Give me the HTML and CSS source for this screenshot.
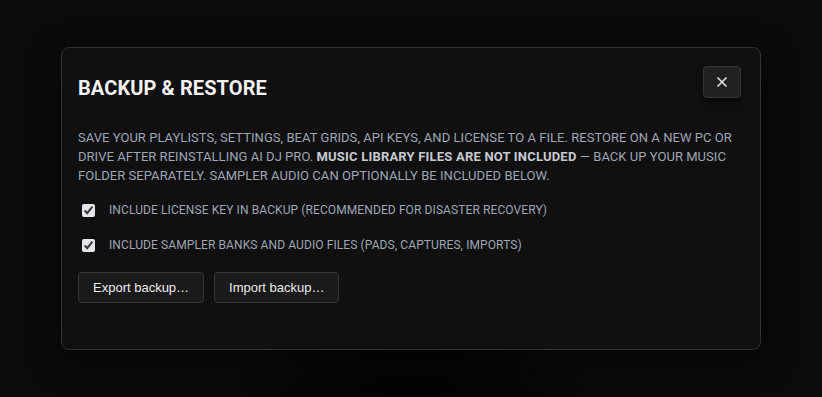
FILE: index.html
```html
<!DOCTYPE html>
<html>
<head>
<meta charset="utf-8">
<link rel="stylesheet" href="styles.css">
</head>
<body>
<div class="backdrop">
  <div class="modal">
    <div class="modal-header">
      <h2 class="modal-title">BACKUP &amp; RESTORE</h2>
      <button class="close-btn" aria-label="Close">
        <svg width="12" height="12" viewBox="0 0 12 12"><path d="M1.5 1.5 L10.5 10.5 M10.5 1.5 L1.5 10.5" stroke="#e8e8e8" stroke-width="1.5" fill="none"/></svg>
      </button>
    </div>
    <p class="desc">SAVE YOUR PLAYLISTS, SETTINGS, BEAT GRIDS, API KEYS, AND LICENSE TO A FILE. RESTORE ON A NEW PC OR DRIVE AFTER REINSTALLING AI DJ PRO. <strong>MUSIC LIBRARY FILES ARE NOT INCLUDED</strong> — BACK UP YOUR MUSIC FOLDER SEPARATELY. SAMPLER AUDIO CAN OPTIONALLY BE INCLUDED BELOW.</p>
    <label class="check-row"><input type="checkbox" checked><span>INCLUDE LICENSE KEY IN BACKUP (RECOMMENDED FOR DISASTER RECOVERY)</span></label>
    <label class="check-row"><input type="checkbox" checked><span>INCLUDE SAMPLER BANKS AND AUDIO FILES (PADS, CAPTURES, IMPORTS)</span></label>
    <div class="actions">
      <button class="btn">Export backup…</button>
      <button class="btn">Import backup…</button>
    </div>
  </div>
</div>
</body>
</html>
```
FILE: styles.css
```css
html, body {
  margin: 0;
  padding: 0;
  width: 822px;
  height: 397px;
  overflow: hidden;
  background: #0b0b0b;
  font-family: Roboto, "Liberation Sans", sans-serif;
}
.backdrop {
  width: 822px;
  height: 397px;
  box-sizing: border-box;
  padding: 47px 0 0 61px;
  background:
    radial-gradient(ellipse 200px 60px at 410px 390px, #030303 0%, rgba(3,3,3,0.6) 60%, rgba(3,3,3,0) 100%),
    #0b0b0b;
}
.modal {
  width: 700px;
  height: 303px;
  box-sizing: border-box;
  background: #101010;
  border: 1px solid #333;
  border-radius: 8px;
  padding: 18px 19px 0 16px;
  box-shadow: 0 10px 30px rgba(0,0,0,0.6);
}
.modal-header {
  display: flex;
  justify-content: space-between;
  align-items: flex-start;
}
.modal-title {
  margin: 10px 0 0 0;
  font-size: 20px;
  font-weight: 700;
  line-height: 24px;
  color: #f2f2f2;
  letter-spacing: 0.1px;
}
.close-btn {
  width: 38px;
  height: 32px;
  margin: 0;
  padding: 0;
  background: #212121;
  border: 1px solid #353535;
  border-radius: 4px;
  display: flex;
  align-items: center;
  justify-content: center;
  box-shadow: 0 5px 6px rgba(0,0,0,0.55);
}
.desc {
  margin: 28px 0 0 0;
  font-size: 13px;
  line-height: 19px;
  color: #9ea6b4;
  letter-spacing: 0.04px;
}
.desc strong {
  color: #c6cad2;
  font-weight: 700;
  letter-spacing: 0.2px;
}
.check-row {
  display: flex;
  align-items: center;
  height: 20px;
  margin-top: 15px;
  font-size: 12px;
  color: #9ea6b4;
  letter-spacing: 0.1px;
}
.check-row + .check-row {
  margin-top: 15px;
}
.check-row input {
  width: 13px;
  height: 13px;
  margin: 0 14px 0 4px;
  accent-color: #e4e6ec;
}
.actions {
  display: flex;
  gap: 10px;
  margin-top: 17px;
}
.btn {
  height: 31px;
  padding: 0 14px;
  background: #1a1a1a;
  border: 1px solid #383838;
  border-radius: 4px;
  color: #ececec;
  font-family: "Liberation Sans", Arial, sans-serif;
  font-size: 13px;
}
```
